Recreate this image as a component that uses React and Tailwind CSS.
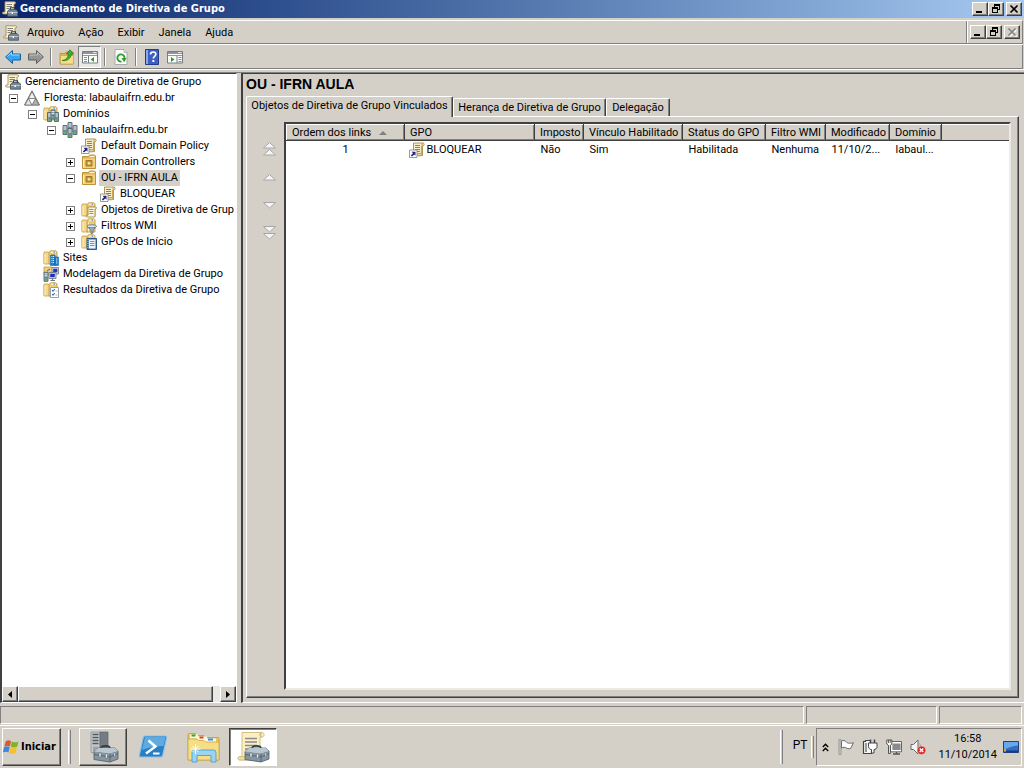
import React from 'react';

/* ---------- Bevels ---------- */
const raised =
  'border border-t-white border-l-white border-r-[#404040] border-b-[#404040] shadow-[inset_-1px_-1px_0_#808080]';
const sunkenThin = 'border border-t-[#808080] border-l-[#808080] border-r-white border-b-white';

/* ---------- Drawing parts ---------- */
const Folder = () => (
  <g>
    <path d="M.8 3q0-1 1-1h3.700l1.500 1.500V14H1.800q-1 0-1-1z" fill="#f4d98c" stroke="#c59c45" strokeWidth=".8" />
    <path d="M6 2.500 7.500.8H13l1 1V14H6z" fill="#f0cb6c" stroke="#bf9338" strokeWidth=".8" />
    <path d="M8 2.200h5" stroke="#fffbe8" strokeWidth="1.200" />
    <path d="M10.500 2.200H12" stroke="#3f8fd6" strokeWidth="1.200" />
    <path d="M2 4v9.200M7.500 4.500v8.700" stroke="#fdf0c4" />
  </g>
);

const Scroll = ({ lines = '#808080' }) => (
  <g>
    <path d="M4.500 1H14c1.500 0 1.500 2.800 0 2.800h-.5V13.500H4c-1.500 0-1.500-2 0-2h.5z" fill="#f8efcb" stroke="#a08a50" strokeWidth=".9" />
    <path d="M12.500 4v9M14 1.200c-1.500.3-1.500 2.400 0 2.600" fill="none" stroke="#caa95a" strokeWidth="1.200" />
    <path d="M11.500 11.500H4c-1.300 0-1.300 2.300 0 2.300h8c1.400 0 1.400-2.300-.5-2.300z" fill="#e6d294" stroke="#a08a50" strokeWidth=".7" />
    <path d="M6 3.500h5M6 5.500h5M6 7.500h5M6 9.500h5" stroke={lines} />
  </g>
);

const Server = ({ x, y }) => (
  <g transform={`translate(${x} ${y})`}>
    <path d="M0 0h4v9H0z" fill="#8fa3af" stroke="#52646f" strokeWidth=".9" />
    <path d="M.5 1.500h3M.5 3.500h3" stroke="#dfe8ec" strokeWidth=".9" />
    <path d="M1 5.500h2" stroke="#52646f" strokeWidth=".8" />
    <path d="M1.500 6.500h1.700v1.700H1.500z" fill="#22d21c" />
  </g>
);

const LinkBadge = () => (
  <g>
    <path d="M.5 8h7.500v7.500H.5z" fill="#fff" stroke="#8d8d8d" strokeWidth=".9" />
    <path d="M2.500 9.800h4v4L5.300 12.600 3 14.600 1.800 13.400 4 11.200z" fill="#24247e" />
  </g>
);

function Pic({ children, className = 'size-4', box = '0 0 16 16' }) {
  return (
    <svg viewBox={box} className={`${className} shrink-0`} aria-hidden="true">
      {children}
    </svg>
  );
}

const ConsoleIcon = () => (
  <Pic>
    <path d="M3 .8h9.500c1.500 0 1.500 2.200 0 2.200H12V13H1.500c-1.300 0-1.300-2 0-2H3z" fill="#fbf2cf" stroke="#a08c54" strokeWidth=".9" />
    <path d="M4.500 3.500H10M4.500 5.500H10M4.500 7.500h3" stroke="#808080" />
    <path d="M5.500 10.200 7.500 8.500h6.500l1.700 1.700v5H5.500z" fill="#748797" stroke="#3f4d58" strokeWidth=".8" />
    <path d="M8.500 8.500V6.800h4v1.700" fill="none" stroke="#333e46" strokeWidth="1.100" />
    <path d="M6 11.500h9.500" stroke="#c8d3da" strokeWidth=".8" />
    <path d="M9.500 11H11v2H9.500z" fill="#eef1f3" />
  </Pic>
);

const ForestIcon = () => (
  <Pic>
    <path d="M8 .8 15.500 15H.5z" fill="#c9c9c9" stroke="#6a6a6a" />
    <path d="M8 1.800 11.500 8.500h-7z" fill="#f0f0f0" stroke="#777" strokeWidth=".8" />
    <path d="M4.500 8.500 8 15H1z" fill="#e6e6e6" stroke="#777" strokeWidth=".8" />
    <path d="M11.500 8.500 15 15H8z" fill="#b0b0b0" stroke="#777" strokeWidth=".8" />
    <path d="M4.500 8.500h7L8 15z" fill="#fff" stroke="#777" strokeWidth=".8" />
  </Pic>
);

const DomainsIcon = () => (
  <Pic>
    <Folder />
    <Server x={4.500} y={6.500} />
    <Server x={11.500} y={6.500} />
    <Server x={8} y={4} />
  </Pic>
);

const DomainIcon = () => (
  <Pic>
    <Server x={6} y={0.500} />
    <Server x={1} y={3.500} />
    <Server x={11} y={3.500} />
    <Server x={6} y={6.500} />
  </Pic>
);

const GpoLinkIcon = () => (
  <Pic>
    <Scroll />
    <LinkBadge />
  </Pic>
);

const OuIcon = () => (
  <Pic>
    <path d="M1.500 2.500h6l1-1.500h5l1 1V14.500h-13z" fill="#e3b34c" stroke="#b98a30" strokeWidth=".9" />
    <path d="M8.500 2.500h5" stroke="#fff8dc" strokeWidth="1.200" />
    <path d="M2 4.500h12V14H2z" fill="#f4d27c" />
    <path d="M2.500 5v8.500" stroke="#fdecb8" />
    <path d="M5 6.500h6v5.500H5z" fill="#c49a3a" stroke="#8f6c1d" strokeWidth=".8" />
    <path d="M6.800 8.200h2.500v2.200H6.800z" fill="#f8e6ae" />
  </Pic>
);

const ObjectsIcon = () => (
  <Pic>
    <Folder />
    <path d="M7 5h7.500c1.200 0 1.200 2 0 2H14v8H6c-1.200 0-1.200-1.800 0-1.800h1z" fill="#fcf5d8" stroke="#a08a50" strokeWidth=".9" />
    <path d="M8.300 7.500h4M8.300 9.500h4M8.300 11.500h4" stroke="#858585" strokeWidth=".9" />
  </Pic>
);

const FilterIcon = () => (
  <Pic>
    <Folder />
    <path d="M6 8.500h9.500l-3.500 3.700V15l-2 .7v-3.500z" fill="#9db8d2" stroke="#50687e" strokeWidth=".8" />
    <ellipse cx="10.800" cy="8.300" rx="4.700" ry="1.500" fill="#dbe8f4" stroke="#50687e" strokeWidth=".8" />
  </Pic>
);

const StarterIcon = () => (
  <Pic>
    <Folder />
    <path d="M6 4.500h9.500v11H6z" fill="#4377ae" stroke="#264f7d" strokeWidth=".9" />
    <path d="M8 5.500h6.500v9H8z" fill="#eef4fa" />
    <path d="M9 7.500h4.500M9 9.500h4.500M9 11.500h4.500" stroke="#7088a0" strokeWidth=".9" />
    <path d="M7 5v10" stroke="#f0f0f0" strokeWidth=".8" strokeDasharray="1 1" />
  </Pic>
);

const SitesIcon = () => (
  <Pic>
    <Folder />
    <path d="M7.500 5H12v10.500H7.500zM12 7h3.500v8.500H12z" fill="#1b80d0" stroke="#1163ad" strokeWidth=".6" />
    <path d="M8.500 6.500H11M8.500 8.500H11M8.500 10.500H11M8.500 12.500H11M13 9h1.800M13 11h1.800M13 13h1.800" stroke="#c8ecff" strokeDasharray="1 .5" />
  </Pic>
);

const ModelingIcon = () => (
  <Pic>
    <path d="M1 1h8l1 1v7H1z" fill="#f0cf78" stroke="#c79a3a" strokeWidth=".8" />
    <Server x={1} y={6.300} />
    <path d="M9 1.500h6.500V8H9z" fill="#dfe4ea" stroke="#66707c" strokeWidth=".8" />
    <path d="M10.200 2.700h4.200v3.600h-4.200z" fill="#2438b0" />
    <path d="M6 6.500h7v6H6z" fill="#dfe4ea" stroke="#66707c" strokeWidth=".8" />
    <path d="M7.200 7.700h4.600v3.500H7.200z" fill="#1d2fc0" />
    <path d="M7.500 14.500h4.500M9.500 12.500v2" stroke="#6d7781" strokeWidth="1.200" />
    <path d="M4 5 7 3" stroke="#2e5fb4" />
  </Pic>
);

const ResultsIcon = () => (
  <Pic>
    <Folder />
    <path d="M7.500 5.500h8v10h-8z" fill="#fff" stroke="#8d97a1" strokeWidth=".9" />
    <path d="m9 8 1 1.200L11.800 7M9 12l1 1.200 1.800-2.200" fill="none" stroke="#2b6fc2" strokeWidth="1.100" />
    <path d="M12.500 9h2M12.500 13h2" stroke="#a0a9b3" strokeWidth=".8" />
  </Pic>
);

/* ---------- Window buttons ---------- */
const glyphs = {
  min: <path d="M1 7h6v2H1z" fill="currentColor" />,
  restore: (
    <g shapeRendering="crispEdges">
      <path d="M3 0h6v6H3z" fill="currentColor" />
      <path d="M4 2h4v3H4z" fill="#d4d0c8" />
      <path d="M1 3h6v6H1z" fill="currentColor" />
      <path d="M2 5h4v3H2z" fill="#d4d0c8" />
    </g>
  ),
  close: <path d="m1.500 1.500 7 7m0-7-7 7" stroke="currentColor" strokeWidth="1.700" fill="none" />,
};

function WinButton({ kind, label, disabled = false }) {
  return (
    <button
      type="button"
      aria-label={label}
      disabled={disabled}
      className={`flex h-[14px] w-4 items-center justify-center bg-[#d4d0c8] text-black disabled:text-[#808080] ${raised}`}
    >
      <svg viewBox="0 0 10 10" className="size-[10px]" aria-hidden="true">
        {disabled && <path d="m2.500 2.500 7 7m0-7-7 7" stroke="#fff" strokeWidth="1.500" />}
        {glyphs[kind]}
      </svg>
    </button>
  );
}

function WindowButtons({ closeDisabled = false, scope }) {
  return (
    <div className="flex">
      <WinButton kind="min" label={`Minimizar ${scope}`} />
      <WinButton kind="restore" label={`Restaurar ${scope}`} />
      <div className="ml-0.5">
        <WinButton kind="close" label={`Fechar ${scope}`} disabled={closeDisabled} />
      </div>
    </div>
  );
}

/* ---------- Toolbar ---------- */
const Separator = () => <div className="mx-[3px] h-[18px] w-0.5 border-l border-l-[#808080] border-r border-r-white" />;

function ToolButton({ label, pressed = false, children }) {
  return (
    <button
      type="button"
      aria-label={label}
      aria-pressed={pressed}
      className={`flex h-[22px] w-[23px] items-center justify-center ${pressed ? `bg-[#eae8e4] ${sunkenThin}` : ''}`}
    >
      {children}
    </button>
  );
}

const arrow = 'M.6 8 7.500 1.500V5h8v6h-8v3.500z';

const PanelGlyph = ({ left = false }) => (
  <Pic>
    <path d="M.5 2.500h15v11.500H.5z" fill="#fff" stroke="#777c82" />
    <path d="M1 3h14v2H1z" fill="#8f959c" />
    <path d="M11 3.500h3.500" stroke="#e8e8e8" />
    <path d="M1 6.500h14" stroke="#777c82" strokeWidth=".8" />
    {left ? (
      <>
        <path d="M6.500 7v7" stroke="#777c82" />
        <path d="M2 8.500h3M2 10.500h3M2 12.500h3" stroke="#7f8fa0" />
        <path d="M12 8v5L8.500 10.500z" fill="#2d9c24" />
      </>
    ) : (
      <>
        <path d="M10 7v7" stroke="#777c82" />
        <path d="M11.500 8.500h3M11.500 10.500h3M11.500 12.500h3" stroke="#7f8fa0" />
        <path d="M4 8v5l3.500-2.500z" fill="#2d9c24" />
      </>
    )}
  </Pic>
);

function Toolbar() {
  return (
    <div className="flex h-6 items-center border-b border-r border-[#808080] pl-px">
      <ToolButton label="Voltar">
        <Pic>
          <path d={arrow} fill="#35a5f0" stroke="#17609e" strokeLinejoin="round" />
          <path d="M2.500 7.500 6.500 3.700V6H14.500" fill="none" stroke="#9bdcff" />
        </Pic>
      </ToolButton>
      <ToolButton label="Avançar">
        <Pic>
          <g transform="translate(16 0) scale(-1 1)">
            <path d={arrow} fill="#959595" stroke="#5f5f5f" strokeLinejoin="round" />
            <path d="M2.500 7.500 6.500 3.700V6H14.500" fill="none" stroke="#c4c4c4" />
          </g>
        </Pic>
      </ToolButton>
      <Separator />
      <ToolButton label="Um nível acima">
        <Pic>
          <path d="M1 4.500h5l1-1.500h7v12H1z" fill="#e4b84f" stroke="#b98a2d" strokeWidth=".8" />
          <path d="M1.500 6.500h13V15h-13z" fill="#f7dc8a" stroke="#c79a3a" strokeWidth=".6" />
          <path d="M3 11.500C7 11 9 8.500 9.500 5H7.300L11 .8 14.500 5h-2C12 9.500 8 12.500 3 11.500z" fill="#3fae2f" stroke="#23791a" strokeWidth=".7" />
        </Pic>
      </ToolButton>
      <ToolButton label="Mostrar/ocultar árvore de console" pressed>
        <PanelGlyph left />
      </ToolButton>
      <Separator />
      <ToolButton label="Atualizar">
        <Pic>
          <path d="M2 .5h9L14 3.500v12H2z" fill="#fbfbfb" stroke="#a0a6ac" strokeWidth=".9" />
          <path d="M11 .5v3h3" fill="#dde2e6" stroke="#a0a6ac" strokeWidth=".7" />
          <path d="M8.500 12.500A3.600 3.600 0 1 1 11.500 9.500" fill="none" stroke="#2f9e2c" strokeWidth="1.800" />
          <path d="M8.500 9h5l-2.300 4.200z" fill="#2f9e2c" />
        </Pic>
      </ToolButton>
      <Separator />
      <ToolButton label="Ajuda">
        <svg viewBox="0 0 16 16" className="size-4" aria-hidden="true">
          <path d="M1.500.5h13v15h-13z" fill="#3c5fc4" stroke="#223c8c" />
          <path d="M2 1h2v14H2z" fill="#8fa6e6" />
          <path d="M6.500 5.500C6.500 3.500 8 3 9.200 3c1.500 0 2.600.9 2.600 2.300 0 2-2.500 2-2.500 4.200" fill="none" stroke="#fff" strokeWidth="1.700" />
          <path d="M8.400 11h1.900v2H8.400z" fill="#fff" />
        </svg>
      </ToolButton>
      <ToolButton label="Mostrar/ocultar painel de ações">
        <PanelGlyph />
      </ToolButton>
    </div>
  );
}

/* ---------- Tree ---------- */
const nodes = [
  { text: 'Gerenciamento de Diretiva de Grupo', icon: ConsoleIcon, indent: 'pl-[3px]', level: 1 },
  { text: 'Floresta: labaulaifrn.edu.br', icon: ForestIcon, indent: 'pl-[3px]', level: 2, box: '-' },
  { text: 'Domínios', icon: DomainsIcon, indent: 'pl-[22px]', level: 3, box: '-' },
  { text: 'labaulaifrn.edu.br', icon: DomainIcon, indent: 'pl-[41px]', level: 4, box: '-' },
  { text: 'Default Domain Policy', icon: GpoLinkIcon, indent: 'pl-[60px]', level: 5, box: ' ' },
  { text: 'Domain Controllers', icon: OuIcon, indent: 'pl-[60px]', level: 5, box: '+' },
  { text: 'OU - IFRN AULA', icon: OuIcon, indent: 'pl-[60px]', level: 5, box: '-', selected: true },
  { text: 'BLOQUEAR', icon: GpoLinkIcon, indent: 'pl-[79px]', level: 6, box: ' ' },
  { text: 'Objetos de Diretiva de Grup', icon: ObjectsIcon, indent: 'pl-[60px]', level: 5, box: '+' },
  { text: 'Filtros WMI', icon: FilterIcon, indent: 'pl-[60px]', level: 5, box: '+' },
  { text: 'GPOs de Início', icon: StarterIcon, indent: 'pl-[60px]', level: 5, box: '+' },
  { text: 'Sites', icon: SitesIcon, indent: 'pl-[22px]', level: 3, box: ' ' },
  { text: 'Modelagem da Diretiva de Grupo', icon: ModelingIcon, indent: 'pl-[22px]', level: 3, box: ' ' },
  { text: 'Resultados da Diretiva de Grupo', icon: ResultsIcon, indent: 'pl-[22px]', level: 3, box: ' ' },
];

function Expander({ kind, name }) {
  if (kind === ' ') return <span className="w-[19px] shrink-0" />;
  return (
    <button
      type="button"
      aria-label={`${kind === '+' ? 'Expandir' : 'Recolher'} ${name}`}
      className="ml-1 mr-1.5 size-[9px] shrink-0"
    >
      <svg viewBox="0 0 9 9" className="block size-[9px]" shapeRendering="crispEdges" aria-hidden="true">
        <path d="M.5.5h8v8h-8z" fill="#fff" stroke="#808080" />
        <path d={kind === '+' ? 'M2 4.500h5M4.500 2v5' : 'M2 4.500h5'} stroke="#000" />
      </svg>
    </button>
  );
}

function TreePane() {
  return (
    <section
      aria-label="Árvore de console"
      className="flex w-[237px] shrink-0 flex-col border border-l-2 border-t-[#404040] border-l-[#404040] border-r-white border-b-white bg-white"
    >
      <ul role="tree" className="min-h-0 flex-1 overflow-hidden">
        {nodes.map(({ text, icon: Icon, indent, level, box, selected }) => (
          <li key={text} role="treeitem" aria-level={level} aria-selected={!!selected} className={`flex h-4 items-center ${indent}`}>
            {box && <Expander kind={box} name={text} />}
            <Icon />
            <span className={`ml-0.5 h-4 whitespace-nowrap px-[2px] leading-4 ${selected ? 'bg-[#d4d0c8]' : ''}`}>{text}</span>
          </li>
        ))}
      </ul>
      <div className="flex h-4 bg-[#eae8e3]">
        <button type="button" aria-label="Rolar para a esquerda" className={`flex w-4 items-center justify-center bg-[#d4d0c8] ${raised}`}>
          <svg viewBox="0 0 4 7" className="h-[7px] w-1" aria-hidden="true"><path d="M4 0v7L0 3.500z" /></svg>
        </button>
        <div className={`w-[195px] bg-[#d4d0c8] ${raised}`} />
        <button type="button" aria-label="Rolar para a direita" className={`ml-auto flex w-4 items-center justify-center bg-[#d4d0c8] ${raised}`}>
          <svg viewBox="0 0 4 7" className="h-[7px] w-1" aria-hidden="true"><path d="M0 0v7l4-3.500z" /></svg>
        </button>
      </div>
    </section>
  );
}

/* ---------- Details ---------- */
const columns = [
  { title: 'Ordem dos links', width: 'w-[118px]', sorted: true },
  { title: 'GPO', width: 'w-[130px]' },
  { title: 'Imposto', width: 'w-[49px]' },
  { title: 'Vínculo Habilitado', width: 'w-[99px]' },
  { title: 'Status do GPO', width: 'w-[83px]' },
  { title: 'Filtro WMI', width: 'w-[60px]' },
  { title: 'Modificado', width: 'w-[64px]' },
  { title: 'Domínio', width: 'w-[52px]' },
];

const up = 'M6.500.5 12.500 6H.5z';
const down = 'M.5.5h12L6.500 6z';
const orderButtons = [
  { label: 'Mover para o início', paths: [[up, 0], [up, 7]] },
  { label: 'Mover para cima', paths: [[up, 4]] },
  { label: 'Mover para baixo', paths: [[down, 4]] },
  { label: 'Mover para o fim', paths: [[down, 0], [down, 7]] },
];

function OrderButtons() {
  return (
    <div className="flex flex-col items-center gap-[14px] pt-5">
      {orderButtons.map(({ label, paths }) => (
        <button key={label} type="button" aria-label={label}>
          <svg viewBox="0 0 13 14" className="block h-[14px] w-[13px]" aria-hidden="true">
            {paths.map(([d, y]) => (
              <path key={y} d={d} transform={`translate(0 ${y})`} fill="#f6f6fa" stroke="#a8a6a2" />
            ))}
          </svg>
        </button>
      ))}
    </div>
  );
}

function LinksTable() {
  return (
    <div className="min-w-0 flex-1 overflow-hidden border-2 border-t-[#404040] border-l-[#404040] border-r-[#eceae5] border-b-[#eceae5] bg-white">
      <table className="w-full table-fixed border-collapse text-left">
        <colgroup>
          {columns.map((c) => (
            <col key={c.title} className={c.width} />
          ))}
          <col />
        </colgroup>
        <thead>
          <tr className="h-4 bg-[#d4d0c8]">
            {columns.map((c) => (
              <th key={c.title} scope="col" className={`p-0 font-normal ${raised}`}>
                <span className="flex h-[14px] items-center gap-2 whitespace-nowrap pl-[5px] leading-[14px]">
                  {c.title}
                  {c.sorted && (
                    <svg viewBox="0 0 8 4" className="h-1 w-2" aria-hidden="true"><path d="M4 0l4 4H0z" fill="#808080" /></svg>
                  )}
                </span>
              </th>
            ))}
            <td className="border-b border-t border-b-[#404040] border-t-white p-0" />
          </tr>
        </thead>
        <tbody>
          <tr className="h-[18px] whitespace-nowrap">
            <td className="p-0 text-center">1</td>
            <td className="p-0 pl-1">
              <span className="flex items-center gap-0.5"><GpoLinkIcon />BLOQUEAR</span>
            </td>
            <td className="p-0 pl-1.5">Não</td>
            <td className="p-0 pl-1.5">Sim</td>
            <td className="p-0 pl-1.5">Habilitada</td>
            <td className="p-0 pl-1.5">Nenhuma</td>
            <td className="p-0 pl-1.5">11/10/2...</td>
            <td className="p-0 pl-1.5">labaul...</td>
            <td className="p-0" />
          </tr>
        </tbody>
      </table>
    </div>
  );
}

const tabBase = 'border border-b-0 border-t-white border-l-white border-r-[#404040] rounded-t-[2px] whitespace-nowrap';

function DetailsPane() {
  return (
    <main className="flex min-w-0 flex-1 flex-col border-l-2 border-t border-b border-t-[#404040] border-l-[#404040] border-b-white pl-[3px] pr-[5px] pt-0.5">
      <h1 className="h-5 font-['Liberation_Sans',sans-serif] text-[14px] font-bold leading-4">OU - IFRN AULA</h1>
      <div role="tablist" className="flex items-end">
        <button type="button" role="tab" aria-selected="true" className={`relative z-10 -mb-px h-[21px] w-[207px] bg-[#d4d0c8] pb-[3px] text-center shadow-[inset_-1px_0_0_#808080] ${tabBase}`}>
          Objetos de Diretiva de Grupo Vinculados
        </button>
        <button type="button" role="tab" aria-selected="false" className={`h-[18px] w-[153px] shadow-[inset_-1px_0_0_#808080] ${tabBase}`}>
          Herança de Diretiva de Grupo
        </button>
        <button type="button" role="tab" aria-selected="false" className={`h-[18px] w-16 shadow-[inset_-1px_0_0_#808080] ${tabBase}`}>
          Delegação
        </button>
      </div>
      <div
        role="tabpanel"
        className={`mb-1 flex min-h-0 flex-1 gap-2 pb-[7px] pl-4 pr-[7px] pt-[5px] ${raised}`}
      >
        <OrderButtons />
        <LinksTable />
      </div>
    </main>
  );
}

/* ---------- Taskbar ---------- */
const Toolbox = ({ x = 0, y = 0 }) => (
  <g transform={`translate(${x} ${y})`}>
    <path d="M8 4.500C8 1 17 1 17 4.500" fill="none" stroke="#343c42" strokeWidth="1.600" />
    <path d="M1 7.500 5 4h17l3 3v8l-8 3L1 15.500z" fill="#8697a3" stroke="#4b5a64" strokeWidth=".8" />
    <path d="M1 7.500 5 4h17l3 3-8 2.500z" fill="#b9c6ce" />
    <path d="M17 9.500V18M1 10.500l16 2.500 8-3.500" fill="none" stroke="#56656f" />
    <path d="M6 9h2v4H6zM12.500 10h2v4h-2zM21 8.500h1.500v4H21z" fill="#e6edf1" stroke="#56656f" strokeWidth=".5" />
  </g>
);

const StartFlag = () => (
  <Pic className="size-4">
    <path d="M2.800 2.200C4.800 .9 6.400 1.200 8.100 2.200L6.900 7.400C5.200 6.400 3.500 6.300 1.300 7.500z" fill="#e2562b" />
    <path d="M8.800 2.600c2 1.100 4.200 1 6.800-.2l-1.400 5.300c-2.200 1-4.200 1-6.500 0z" fill="#79b62c" />
    <path d="M1.100 8.200c2-1.200 3.800-1 5.600-.1L5.400 13.500C3.700 12.500 2 12.500-.2 13.700z" fill="#3d86d8" />
    <path d="M7.400 8.500c2.200 1 4.400 1 6.600 0l-1.400 5.500c-2.200 1-4.400 1-6.500-.2z" fill="#f6c02c" />
  </Pic>
);

const ServerManagerIcon = () => (
  <Pic className="h-8 w-9" box="0 0 36 32">
    <path d="M6 1h9v22l-9-1.500z" fill="#c3c9cc" stroke="#82898d" strokeWidth=".7" />
    <path d="M15 1h8v19l-8 3z" fill="#747d83" stroke="#5b6468" strokeWidth=".7" />
    <path d="M7.500 3.500h6M7.500 6.500h6M7.500 9.500h6M7.500 12.500h6" stroke="#52595d" strokeWidth="1.300" />
    <path d="M8 15.500h5v5H8z" fill="#a0a7ab" />
    <Toolbox x={8} y={13} />
  </Pic>
);

const PowerShellIcon = () => (
  <Pic className="h-8 w-8" box="0 0 32 32">
    <path d="M8 5h20.500q1.500 0 1.200 1.500l-4 18q-.3 1.500-2 1.500H3.500q-1.500 0-1.200-1.500l4-18Q6.500 5 8 5z" fill="#2a7fc4" stroke="#89c2ea" strokeWidth="1.200" />
    <path d="M8 6h20.500l-2 9Q15 15 5 19z" fill="#5fabe0" />
    <path d="m11.500 9.500 7 6-9.500 7" fill="none" stroke="#fff" strokeWidth="2.400" />
    <path d="M16 22.500h6.500" stroke="#fff" strokeWidth="2" />
  </Pic>
);

const ExplorerIcon = () => (
  <Pic className="h-8 w-9" box="0 0 36 32">
    <path d="M3 4q0-1.500 1.500-1.500h6L12 4.500h7l1 2h13q1 0 1 1V29H3z" fill="#eac75e" stroke="#c19b3b" strokeWidth=".8" />
    <path d="M5 3.500h8v4H5zM12 5.500h10v4H12zM19 7.500h12v4H19z" fill="#fdf8e2" />
    <path d="M6.500 4.500h4" stroke="#2fa52b" strokeWidth="2" />
    <path d="M14.500 6.500h4" stroke="#d2462f" strokeWidth="2" />
    <path d="M23 8.500h5" stroke="#3b8fe0" strokeWidth="2" />
    <path d="M3 8h9l1.500 1.500H19l1.500 1.500H34v18H3z" fill="#f7dd85" stroke="#c9a74a" strokeWidth=".8" />
    <path d="M7 31v-9.500q0-2.500 2.500-2.500h19q2.500 0 2.500 2.500V31h-5v-6.500H12V31z" fill="#9bd4f3" stroke="#4d9fd0" strokeWidth=".9" />
    <path d="M10.500 13v10M5.500 18h10M7.500 15l6 6M13.500 15l-6 6" stroke="#fff" strokeWidth=".9" />
  </Pic>
);

const GpmcTaskIcon = () => (
  <Pic className="h-8 w-9" box="0 0 36 32">
    <path d="M7 1.500h20c2.800 0 2.800 4.500 0 4.500h-2v23H5c-2.500 0-2.500-3.500 0-3.500h2z" fill="#fbf0c4" stroke="#cdb878" strokeWidth=".9" />
    <path d="M26.500 1.500c-2 .8-2 3.700 0 4.500" fill="#e2cb84" stroke="#c2a95f" />
    <path d="M4.500 25.500H20V29H4.500c-2 0-2-3.500 0-3.500z" fill="#efdc98" stroke="#cdb878" strokeWidth=".7" />
    <path d="M10 7.500h12M10 11h12M10 14.500h12M10 18h8M10 21.500h3" stroke="#8b8b8b" strokeWidth="1.400" />
    <Toolbox x={9} y={13} />
  </Pic>
);

function TaskButton({ label, look = '', children }) {
  return (
    <button type="button" aria-label={label} className={`flex h-[38px] w-12 items-center justify-center ${look}`}>
      {children}
    </button>
  );
}

function Taskbar() {
  return (
    <footer className="flex h-[43px] shrink-0 items-center border-t border-t-white px-0.5">
      <button type="button" className={`flex h-[38px] w-[59px] items-center gap-0.5 font-['DejaVu_Sans_Condensed',sans-serif] font-bold ${raised}`}>
        <StartFlag />
        Iniciar
      </button>
      <div className="ml-[7px] mr-2 h-[34px] w-[3px] border-l border-r border-l-white border-r-[#808080]" />
      <nav aria-label="Programas" className="flex gap-0.5">
        <TaskButton label="Gerenciador de Servidores" look={raised}><ServerManagerIcon /></TaskButton>
        <TaskButton label="Windows PowerShell"><PowerShellIcon /></TaskButton>
        <TaskButton label="Windows Explorer"><ExplorerIcon /></TaskButton>
        <TaskButton
          label="Gerenciamento de Diretiva de Grupo"
          look="bg-white border border-t-[#404040] border-l-[#404040] border-r-white border-b-white shadow-[inset_1px_1px_0_#808080]"
        >
          <GpmcTaskIcon />
        </TaskButton>
      </nav>
      <div className="ml-auto flex items-center">
        <div className="h-[34px] w-[3px] border-l border-r border-l-white border-r-[#808080]" />
        <button type="button" className="w-7 pb-1 pl-1.5 text-center text-[12px]">PT</button>
        <div className="h-[22px] w-[3px] border-l border-r border-l-white border-r-[#808080]" />
      </div>
      <div className={`ml-0.5 flex h-[38px] w-[206px] items-center pl-[3px] pr-0.5 ${sunkenThin}`}>
        <button type="button" aria-label="Mostrar ícones ocultos" className="flex w-2.5 justify-center">
          <svg viewBox="0 0 7 9" className="h-[9px] w-[7px]" aria-hidden="true">
            <path d="m.8 4 2.700-2.700L6.200 4M.8 8l2.700-2.700L6.200 8" fill="none" stroke="#000" strokeWidth="1.400" />
          </svg>
        </button>
        <div className="ml-2 flex gap-2">
          <Pic>
            <path d="M2 .5v15" stroke="#6b6b6b" strokeWidth="2.600" />
            <path d="M2 1v14" stroke="#fff" strokeWidth="1" />
            <path d="M3.500 2c2-.8 3.500-.5 4.500.8s3 2 7.500 1L12.500 9.500C10.500 10 9 9.500 8 8.800S5.500 8 3.500 9z" fill="#fff" stroke="#6b6b6b" />
          </Pic>
          <Pic>
            <path d="M8 1.500H3.500v1H1.500v12h8V12" fill="#f6f6f6" stroke="#444" strokeWidth="1.200" />
            <path d="M3 4h2v9H3z" fill="#999" />
            <path d="M8.500.5v4M12.500.5v4" stroke="#444" strokeWidth="1.500" />
            <path d="M6.500 4h8.500v3.500c0 2-1.500 3-3 3v3.500H9.500v-3.500c-1.500 0-3-1-3-3z" fill="#fff" stroke="#444" />
          </Pic>
          <Pic>
            <path d="M5.500 3.500h10v8.500h-10z" fill="#8b8b8b" stroke="#fff" strokeWidth="1.800" />
            <path d="M4.500 2.500h11v10.300h-11z" fill="none" stroke="#555" strokeWidth=".9" />
            <path d="M7 15h7M10.500 13v2" stroke="#555" strokeWidth="1.300" />
            <path d="M.8 1h5v4L4.300 6.500v8H2.500v-8L.8 5z" fill="#fff" stroke="#444" strokeWidth=".9" />
            <path d="M2.500 1v3M4.200 1v3" stroke="#444" strokeWidth=".8" />
          </Pic>
          <Pic>
            <path d="M1 5.500h2.500L8 1v14l-4.500-4.500H1z" fill="#f4f4f4" stroke="#6b6b6b" />
            <path d="M9.500 4.500c1.500 1.800 1.500 5 0 7" fill="none" stroke="#999" />
            <circle cx="11.500" cy="11.300" r="4.300" fill="#d92a20" stroke="#f3d7d4" strokeWidth=".5" />
            <path d="m9.700 9.500 3.600 3.600m0-3.600-3.600 3.600" stroke="#fff" strokeWidth="1.400" />
          </Pic>
        </div>
        <time dateTime="2014-10-11T16:58" className="ml-auto mr-1.5 text-center leading-4">
          16:58
          <br />
          11/10/2014
        </time>
        <button type="button" aria-label="Mostrar área de trabalho">
          <Pic>
            <path d="M.5 2.500h15v11H.5z" fill="#2f6fc6" stroke="#16386e" strokeWidth=".9" />
            <path d="M1 3h14v3.500Q7 7 1 11z" fill="#69a8ea" />
            <path d="M1 11.500h14v2H1z" fill="#173d7c" />
            <path d="M1 10.500h2v2H1z" fill="#f2b632" />
          </Pic>
        </button>
      </div>
    </footer>
  );
}

/* ---------- Page ---------- */
export default function App() {
  return (
    <div className="flex h-screen flex-col overflow-hidden bg-[#d4d0c8] font-[Roboto,'Noto_Sans',sans-serif] text-[11px] leading-[14px] text-black">
      <header className="flex h-[18px] shrink-0 items-center gap-px bg-linear-to-r from-[#0a246a] to-[#a6caf0] px-0.5">
        <ConsoleIcon />
        <span className="ml-px flex-1 font-['DejaVu_Sans_Condensed',sans-serif] font-bold text-white">
          Gerenciamento de Diretiva de Grupo
        </span>
        <WindowButtons scope="janela principal" />
      </header>

      <div className="mr-px mt-0.5 flex h-6 shrink-0 border-b border-r border-t border-b-[#808080] border-r-[#808080] border-t-white">
        <div className="flex flex-1 items-center pl-[3px] pt-0.5">
          <ConsoleIcon />
          <nav aria-label="Menu" className="flex pl-px">
            {['Arquivo', 'Ação', 'Exibir', 'Janela', 'Ajuda'].map((m) => (
              <button key={m} type="button" className="px-[7px]">{m}</button>
            ))}
          </nav>
        </div>
        <div className="flex items-center border-l border-l-[#808080] pl-[3px] pr-0.5 shadow-[inset_1px_0_0_#fff]">
          <WindowButtons scope="console" closeDisabled />
        </div>
      </div>
      <div className="mr-px shrink-0 border-t border-t-white">
        <Toolbar />
      </div>

      <div className="flex min-h-0 flex-1 border-t border-t-white pt-0.5">
        <div className="flex min-h-0 flex-1 gap-1 border-t border-t-[#808080]">
          <TreePane />
          <DetailsPane />
        </div>
      </div>

      <div className="mb-px mt-[3px] flex h-[18px] shrink-0 gap-0.5 pr-0.5">
        <div className={`flex-1 ${sunkenThin}`} />
        <div className={`w-[131px] ${sunkenThin}`} />
        <div className={`w-[83px] ${sunkenThin}`} />
      </div>
      <Taskbar />
    </div>
  );
}
